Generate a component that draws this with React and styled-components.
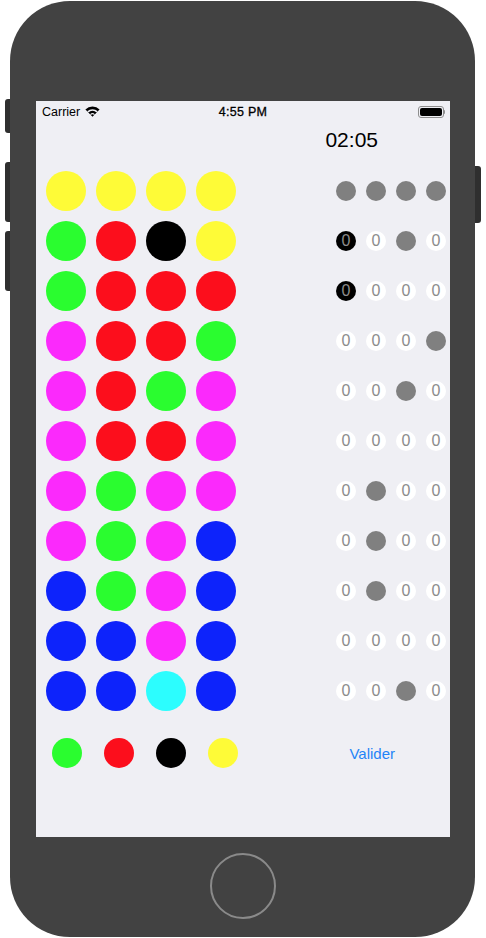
import React from 'react';
import styled, { createGlobalStyle } from 'styled-components';

const colors = {
  Y: '#fefb37',
  G: '#2afd2f',
  R: '#fc0e1c',
  K: '#000000',
  M: '#fb29fc',
  B: '#0d23fb',
  C: '#2cfdfe',
};

const guesses = [
  'YYYY',
  'GRKY',
  'GRRR',
  'MRRG',
  'MRGM',
  'MRRM',
  'MGMM',
  'MGMB',
  'BGMB',
  'BBMB',
  'BBCB',
];

// g = gray peg, w = white "0", k = black "0"
const hints = [
  'gggg',
  'kwgw',
  'kwww',
  'wwwg',
  'wwgw',
  'wwww',
  'wgww',
  'wgww',
  'wgww',
  'wwww',
  'wwgw',
];

const palette = ['G', 'R', 'K', 'Y'];

const GlobalStyle = createGlobalStyle`
  html, body {
    margin: 0;
    padding: 0;
    background: #ffffff;
    font-family: "Liberation Sans", Arial, sans-serif;
  }
`;

const Page = styled.div`
  display: flex;
  align-items: flex-start;
  width: 486px;
  height: 938px;
`;

const Rail = styled.div`
  display: flex;
  flex-direction: column;
  align-items: ${(p) => (p.right ? 'flex-start' : 'flex-end')};
  width: ${(p) => (p.right ? '11px' : '10px')};
  padding-top: ${(p) => (p.right ? '166px' : '99px')};
`;

const SideButton = styled.div`
  width: ${(p) => (p.right ? '6px' : '5px')};
  height: ${(p) => p.h}px;
  margin-top: ${(p) => p.mt || 0}px;
  background: #2f2f2f;
  border-radius: ${(p) => (p.right ? '0 3px 3px 0' : '3px 0 0 3px')};
`;

const Body = styled.div`
  width: 465px;
  height: 936px;
  margin-top: 1px;
  box-sizing: border-box;
  padding: 100px 25px 0 26px;
  background: #424242;
  border-radius: 60px;
  display: flex;
  flex-direction: column;
  align-items: center;
`;

const Screen = styled.div`
  width: 414px;
  height: 736px;
  background: #efeff4;
  display: flex;
  flex-direction: column;
`;

const StatusBar = styled.div`
  height: 20px;
  display: grid;
  grid-template-columns: 1fr auto 1fr;
  align-items: center;
  padding: 1px 6px 0;
  box-sizing: border-box;
  font-size: 12.5px;
  color: #000;
`;

const Carrier = styled.div`
  display: flex;
  align-items: center;
  gap: 5px;
`;

const Clock = styled.div`
  -webkit-text-stroke: 0.3px #000;
  letter-spacing: 0.3px;
`;

const Battery = styled.div`
  justify-self: end;
  display: flex;
  align-items: center;
  margin-right: -1px;
`;

const BatteryShell = styled.div`
  width: 22px;
  height: 8px;
  padding: 1px;
  border: 1px solid #8e8e8e;
  border-radius: 3px;
  display: flex;
`;

const BatteryFill = styled.div`
  flex: 1;
  background: #000;
  border-radius: 2px;
`;

const BatteryNub = styled.div`
  width: 1.5px;
  height: 4px;
  background: #8e8e8e;
  border-radius: 0 1px 1px 0;
`;

const TimerRow = styled.div`
  height: 38px;
  display: flex;
  align-items: center;
  justify-content: flex-end;
  padding-right: 72px;
  font-size: 21px;
  color: #000;
`;

const Board = styled.div`
  display: flex;
  flex-direction: column;
  gap: 10px;
  margin-top: 12px;
  padding: 0 4px 0 10px;
`;

const Row = styled.div`
  display: flex;
  align-items: center;
  justify-content: space-between;
  height: 40px;
`;

const Guess = styled.div`
  display: flex;
  gap: 10px;
`;

const Ball = styled.div`
  width: ${(p) => p.size}px;
  height: ${(p) => p.size}px;
  border-radius: 50%;
  background: ${(p) => p.color};
`;

const Hints = styled.div`
  display: flex;
  gap: 10px;
`;

const Peg = styled.div`
  width: 20px;
  height: 20px;
  border-radius: 50%;
  background: ${(p) => (p.kind === 'g' ? '#808080' : p.kind === 'k' ? '#000' : '#fff')};
  color: #8c8c8c;
  font-family: "Liberation Sans", Arial, sans-serif;
  font-size: 16px;
  line-height: 20px;
  text-align: center;
`;

const PickerRow = styled.div`
  display: flex;
  align-items: center;
  justify-content: space-between;
  margin-top: 27px;
  height: 30px;
  padding: 0 55px 0 5px;
`;

const Picker = styled.div`
  display: grid;
  grid-template-columns: repeat(4, 52px);
  justify-items: center;
`;

const Valider = styled.button`
  border: none;
  background: none;
  padding: 0;
  font-family: "Liberation Sans", Arial, sans-serif;
  font-size: 15px;
  color: #1f84f7;
  cursor: pointer;
`;

const HomeButton = styled.div`
  width: 62px;
  height: 62px;
  margin-top: 16px;
  border: 2px solid #8a8a8a;
  border-radius: 50%;
`;

const Wifi = () => (
  <svg width="15" height="11" viewBox="0 0 15 11">
    <path d="M7.5 10.6 L0.4 3.4 A10 10 0 0 1 14.6 3.4 Z" fill="#000" />
    <path d="M7.5 10.6 L2.3 5.3 A7.4 7.4 0 0 1 12.7 5.3 Z" fill="#efeff4" />
    <path d="M7.5 10.6 L3.4 6.4 A5.8 5.8 0 0 1 11.6 6.4 Z" fill="#000" />
    <path d="M7.5 10.6 L5.1 8.2 A3.4 3.4 0 0 1 9.9 8.2 Z" fill="#efeff4" />
    <path d="M7.5 10.6 L5.9 9 A2.3 2.3 0 0 1 9.1 9 Z" fill="#000" />
  </svg>
);

const App = () => (
  <>
    <GlobalStyle />
    <Page>
      <Rail>
        <SideButton h={34} />
        <SideButton h={60} mt={29} />
        <SideButton h={60} mt={9} />
      </Rail>
      <Body>
        <Screen>
          <StatusBar>
            <Carrier>
              Carrier <Wifi />
            </Carrier>
            <Clock>4:55 PM</Clock>
            <Battery>
              <BatteryShell>
                <BatteryFill />
              </BatteryShell>
              <BatteryNub />
            </Battery>
          </StatusBar>
          <TimerRow>02:05</TimerRow>
          <Board>
            {guesses.map((g, i) => (
              <Row key={i}>
                <Guess>
                  {g.split('').map((c, j) => (
                    <Ball key={j} size={40} color={colors[c]} />
                  ))}
                </Guess>
                <Hints>
                  {hints[i].split('').map((h, j) => (
                    <Peg key={j} kind={h}>
                      {h === 'g' ? '' : '0'}
                    </Peg>
                  ))}
                </Hints>
              </Row>
            ))}
          </Board>
          <PickerRow>
            <Picker>
              {palette.map((c) => (
                <Ball key={c} size={30} color={colors[c]} />
              ))}
            </Picker>
            <Valider>Valider</Valider>
          </PickerRow>
        </Screen>
        <HomeButton />
      </Body>
      <Rail right>
        <SideButton right h={57} />
      </Rail>
    </Page>
  </>
);

export default App;
